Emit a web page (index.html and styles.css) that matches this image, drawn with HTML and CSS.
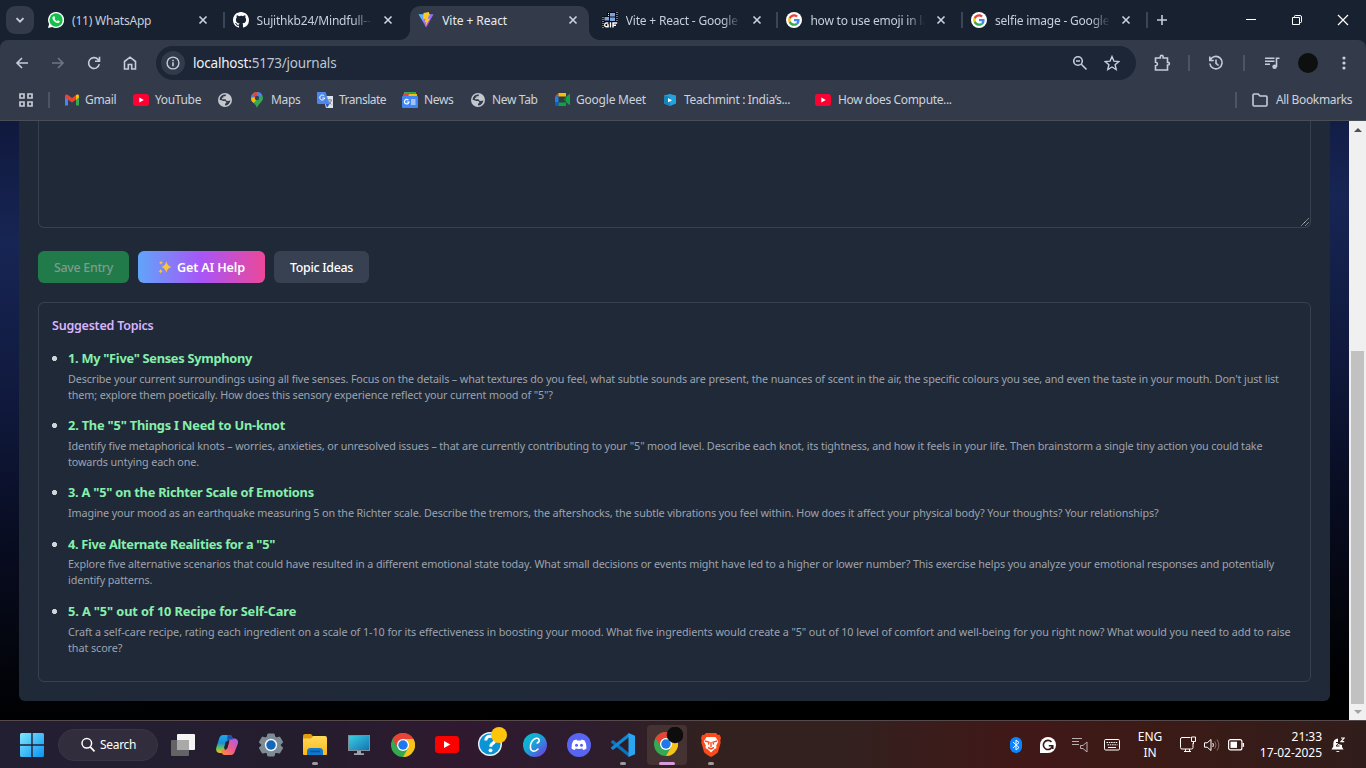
FILE: index.html
```html
<!DOCTYPE html>
<html lang="en">
<head>
<meta charset="utf-8">
<title>Vite + React</title>
<link rel="stylesheet" href="styles.css">
</head>
<body>
<svg class="defs" width="0" height="0">
  <defs>
    <linearGradient id="win" x1="0" y1="0" x2="1" y2="1"><stop offset="0" stop-color="#7ee8fb"/><stop offset="1" stop-color="#0a93f5"/></linearGradient>
    <linearGradient id="vite" x1="0" y1="0" x2="1" y2="1"><stop offset="0" stop-color="#41d1ff"/><stop offset=".6" stop-color="#a45cfb"/><stop offset="1" stop-color="#bd34fe"/></linearGradient>
    <linearGradient id="canva" x1="0" y1="0" x2="1" y2="1"><stop offset="0" stop-color="#00c4cc"/><stop offset=".45" stop-color="#1aa3d6"/><stop offset="1" stop-color="#7d2ae8"/></linearGradient>
    <linearGradient id="copA" x1="0" y1="0" x2="0" y2="1"><stop offset="0" stop-color="#1fa6e8"/><stop offset=".45" stop-color="#1c8fd8"/><stop offset=".7" stop-color="#5fc35a"/><stop offset="1" stop-color="#f0c228"/></linearGradient>
    <linearGradient id="copB" x1="1" y1="0" x2="0" y2="1"><stop offset="0" stop-color="#a45cf0"/><stop offset=".5" stop-color="#ee5a90"/><stop offset="1" stop-color="#fb9038"/></linearGradient>
    <linearGradient id="fold" x1="0" y1="0" x2="0" y2="1"><stop offset="0" stop-color="#ffd95c"/><stop offset="1" stop-color="#fbb716"/></linearGradient>
    <linearGradient id="scr" x1="0" y1="0" x2="1" y2="1"><stop offset="0" stop-color="#3bd0e0"/><stop offset="1" stop-color="#1271b5"/></linearGradient>
    <symbol id="close" viewBox="0 0 10 10"><path d="M1.500 1.500l7 7m0-7l-7 7" stroke="currentColor" stroke-width="1.600" fill="none"/></symbol>
    <symbol id="google" viewBox="0 0 48 48"><circle cx="24" cy="24" r="24" fill="#fff"/><g transform="translate(6.500 6.500) scale(.73)"><path fill="#EA4335" d="M24 9.500c3.540 0 6.710 1.220 9.210 3.600l6.850-6.850C35.900 2.380 30.470 0 24 0 14.620 0 6.510 5.380 2.560 13.220l7.980 6.190C12.430 13.720 17.740 9.500 24 9.500z"/><path fill="#4285F4" d="M46.980 24.550c0-1.570-.15-3.090-.38-4.550H24v9.020h12.940c-.58 2.960-2.260 5.480-4.780 7.180l7.730 6c4.510-4.180 7.090-10.360 7.090-17.650z"/><path fill="#FBBC05" d="M10.530 28.590A14.500 14.500 0 0 1 9.770 24c0-1.600.27-3.140.76-4.590l-7.980-6.190A23.900 23.900 0 0 0 0 24c0 3.880.92 7.540 2.560 10.780z"/><path fill="#34A853" d="M24 48c6.480 0 11.930-2.130 15.890-5.810l-7.730-6c-2.150 1.450-4.920 2.300-8.160 2.300-6.260 0-11.570-4.220-13.470-9.910l-7.980 6.190C6.510 42.620 14.620 48 24 48z"/></g></symbol>
    <symbol id="youtube" viewBox="0 0 24 18"><rect width="24" height="18" rx="4" fill="#ff0033"/><path d="M9.500 5.200v7.600L16.200 9z" fill="#fff"/></symbol>
    <symbol id="globe" viewBox="0 0 24 24"><path fill="#c4c7cd" fill-rule="evenodd" d="M12 0a12 12 0 1 1 0 24a12 12 0 0 1 0-24zM14 2.600l-1.200 3h-3.600v2.600H6.800v2.600h6l1.600 2.400 3.600.4 3.200-1.200A9.300 9.300 0 0 1 12 21.400v-2.600l2.400-2.600-1.600-2.600H9.400L2.700 11.400A9.400 9.400 0 0 1 14 2.600z"/></symbol>
    <symbol id="chrome" viewBox="0 0 48 48"><circle cx="24" cy="24" r="24" fill="#34a853"/><path fill="#fbc116" d="M24 12h20.800A24 24 0 0 1 24 48l10.400-18z"/><path fill="#ea4335" d="M3.200 12a24 24 0 0 1 41.600 0H24a12 12 0 0 0-10.400 18z"/><circle cx="24" cy="24" r="12" fill="#fff"/><circle cx="24" cy="24" r="9.500" fill="#1f77ee"/></symbol>
  </defs>
</svg>

<div class="screen">
  <header class="tabstrip">
    <button class="tab-search"><svg width="12" height="12" viewBox="0 0 12 12"><path d="M2.500 4.200L6 7.700l3.500-3.500" class="line bold"/></svg></button>
    <div class="tab tab-first">
      <svg class="fav" viewBox="0 0 32 32"><path d="M16 0a16 16 0 1 1-7.500 30L0 32l2.200-8A16 16 0 0 1 16 0z" fill="#fff"/><circle cx="16" cy="16" r="13.300" fill="#12c04a"/><path fill="#fff" d="M11.200 8.500c.8-.5 1.600-.2 1.900.5l1.100 2.600c.2.500 0 .9-.3 1.200l-1 1.200c1.200 2.200 2.800 3.600 5 4.500l1.300-1.500c.4-.4.700-.4 1.200-.2l2.600 1.300c.6.300.6.800.4 1.500-.6 1.900-2.600 2.900-4.500 2.500-5-1-9-4.800-10-9-.3-1.800.600-3.700 2.300-4.600z"/></svg>
      <span class="tt"><span class="t">(11) WhatsApp</span></span><svg class="x"><use href="#close"/></svg>
    </div>
    <div class="tab sep">
      <svg class="fav" viewBox="0 0 16 16"><path fill="#fff" d="M8 0C3.580 0 0 3.580 0 8c0 3.540 2.290 6.530 5.470 7.590.4.070.55-.17.55-.38 0-.19-.01-.82-.01-1.490-2.010.37-2.530-.49-2.690-.94-.09-.23-.48-.94-.82-1.130-.28-.15-.68-.52-.01-.53.63-.01 1.080.58 1.230.82.72 1.210 1.870.87 2.330.66.07-.52.28-.87.51-1.070-1.780-.2-3.640-.89-3.640-3.950 0-.87.31-1.590.82-2.150-.08-.2-.36-1.020.08-2.120 0 0 .67-.21 2.200.82A7.600 7.600 0 0 1 8 3.860c.68 0 1.360.09 2 .27 1.530-1.040 2.200-.82 2.200-.82.44 1.100.16 1.920.08 2.120.51.56.82 1.270.82 2.150 0 3.070-1.870 3.750-3.650 3.950.29.25.54.73.54 1.480 0 1.070-.01 1.930-.01 2.200 0 .21.15.46.55.38A8.010 8.010 0 0 0 16 8c0-4.420-3.580-8-8-8z"/></svg>
      <span class="tt fade"><span class="t">Sujithkb24/Mindfull--</span></span><svg class="x"><use href="#close"/></svg>
    </div>
    <div class="tab active">
      <svg class="fav" viewBox="0 0 32 32"><path fill="url(#vite)" d="M1 4.500l30 0L16.500 31z"/><path fill="#ffc920" d="M21.500 0L11 2l-.7 12.500 5-.9-2 7.600 3.500-1-2.600 9.800L24 13l-4.200.8L21.500 7l2.500-.5z"/></svg>
      <span class="tt wide"><span class="t">Vite + React</span></span><svg class="x"><use href="#close"/></svg>
    </div>
    <div class="tab">
      <svg class="fav" viewBox="0 0 16 16"><path d="M5 0h11v10H5z" fill="#080b12"/><path d="M0 4h10v12H0z" fill="#080b12"/><path d="M8 1h5v3.500H8zM8 5.500h5V9H8zM2.500 5H7v3.500H2.500z" fill="#7da3dc"/><path d="M6.500 1v3M15 0v10M1 5v11" stroke="#dfe5ee" stroke-dasharray="1 1"/><path d="M6.300 11H4.200q-1.500 0-1.500 1.900t1.500 1.900h1.900v-1.900H5M8.500 10.200v5.400M11 15.600V11h4.200M11 13.300h3" stroke="#fff" stroke-width="1.400" fill="none"/></svg>
      <span class="tt fade"><span class="t">Vite + React - Google</span></span><svg class="x"><use href="#close"/></svg>
    </div>
    <div class="tab sep">
      <svg class="fav"><use href="#google"/></svg>
      <span class="tt fade"><span class="t">how to use emoji in la</span></span><svg class="x"><use href="#close"/></svg>
    </div>
    <div class="tab sep">
      <svg class="fav"><use href="#google"/></svg>
      <span class="tt fade"><span class="t">selfie image - Google</span></span><svg class="x"><use href="#close"/></svg>
    </div>
    <div class="newtab sep"><svg width="12" height="12" viewBox="0 0 12 12"><path d="M6 1v10M1 6h10" class="line"/></svg></div>
    <div class="winctl">
      <svg width="12" height="12" viewBox="0 0 12 12"><path d="M1 5.500h10" stroke="#fff"/></svg>
      <svg width="12" height="12" viewBox="0 0 12 12"><path d="M1.500 3.500h7v7h-7zM3.500 3.500V2.300q0-.8.800-.8H9q1.500 0 1.500 1.500v4.700q0 .8-.8.800H8.500" fill="none" stroke="#fff"/></svg>
      <svg width="12" height="12" viewBox="0 0 12 12"><path d="M1 1l10 10m0-10L1 11" stroke="#fff" stroke-width="1.200"/></svg>
    </div>
  </header>

  <div class="toolbar">
    <svg class="ic" viewBox="0 0 16 16"><path d="M14 8H3m5-5L3 8l5 5" class="line"/></svg>
    <svg class="ic dim" viewBox="0 0 16 16"><path d="M2 8h11M8 3l5 5-5 5" class="line"/></svg>
    <svg class="ic" viewBox="0 0 16 16"><path d="M13.300 9.200A5.400 5.400 0 1 1 12 4.400L13.300 6M13.500 1.800v4.500H9" class="line"/></svg>
    <svg class="ic" viewBox="0 0 16 16"><path d="M2.500 14V6.500L8 2.200l5.500 4.300V14h-3.800V9.500H6.300V14z" class="line"/></svg>
    <div class="omnibox">
      <span class="info"><svg width="14" height="14" viewBox="0 0 14 14"><circle cx="7" cy="7" r="5.900" class="line thin"/><path d="M7 6.200v4M7 3.800v1.400" class="line"/></svg></span>
      <span class="url t"><b>localhost:</b>5173/journals</span>
      <svg class="ic" viewBox="0 0 16 16"><circle cx="6" cy="6" r="4.300" class="line"/><path d="M4 6h4M9.300 9.300L14.500 14.500" class="line"/></svg>
      <svg class="ic star" viewBox="0 0 16 16"><path d="M8 1.500l1.900 4.600 4.900.4-3.700 3.200 1.100 4.800L8 12l-4.200 2.500 1.100-4.800L1.200 6.500l4.900-.4z" class="line thin"/></svg>
    </div>
    <svg class="ic ext" viewBox="0 0 18 18"><path d="M2.500 4h4.800V2.800a1.400 1.400 0 0 1 2.800 0V4h4.400v4.400h.6a1.300 1.300 0 0 1 0 2.600h-.6v5h-12v-4.200c2.600-.3 2.600-3.300 0-3.600z" class="line"/></svg>
    <i class="vbar"></i>
    <svg class="ic" viewBox="0 0 16 16"><path d="M2.300 5A6.200 6.200 0 1 1 1.800 8.500M1.800 1.500v4h4M8 4.500V8.300l2.600 2.200" class="line"/></svg>
    <i class="vbar"></i>
    <svg class="ic" viewBox="0 0 16 16"><path d="M1 3.200h9.500M1 6.200h9.500M1 9.200h5M12.500 12V3.200h3" class="line"/><circle cx="10.600" cy="11.800" r="2.300" fill="#bfc9dd"/></svg>
    <i class="avatar"></i>
    <svg class="ic" viewBox="0 0 16 16"><g fill="#c8d0df"><circle cx="8" cy="3" r="1.600"/><circle cx="8" cy="8" r="1.600"/><circle cx="8" cy="13" r="1.600"/></g></svg>
  </div>

  <nav class="bookmarks">
    <svg class="grid4" width="14" height="14" viewBox="0 0 14 14"><path d="M1 1h4v4H1zM9 1h4v4H9zM1 9h4v4H1zM9 9h4v4H9z" fill="none" stroke="#c7cbd3" stroke-width="1.700"/></svg>
    <i class="vbar"></i>
    <a><svg width="14" height="12" viewBox="0 0 14 11"><path d="M0 1.500V11h3V4.500z" fill="#4285f4"/><path d="M11 4.500V11h3V1.500z" fill="#34a853"/><path d="M0 1.500C0 0 2 -.5 3 .5l4 3 4-3c1-1 3-.5 3 1V3L7 8 0 3z" fill="#ea4335"/><path d="M11 .5c1-1 3-.5 3 1V3l-3 2.300z" fill="#fbbc04"/></svg><span class="t">Gmail</span></a>
    <a><svg width="16" height="12"><use href="#youtube"/></svg><span class="t">YouTube</span></a>
    <a><svg width="14" height="14"><use href="#globe"/></svg></a>
    <a class="roomy"><svg width="12" height="16" viewBox="0 0 12 16"><path d="M6 0a6 6 0 0 1 6 6c0 4-4.500 5-6 10C4.500 11 0 10 0 6a6 6 0 0 1 6-6z" fill="#34a853"/><path d="M6 0a6 6 0 0 1 5.300 3.200L1 9.500A6 6 0 0 1 1.400 2.200z" fill="#4285f4"/><path d="M1.400 2.200A6 6 0 0 1 6 0L6 3.500 4 5.600z" fill="#ea4335"/><path d="M0 6l4-1 1.500 3L2.500 11Q0 9 0 6z" fill="#fbbc04"/><circle cx="6" cy="6" r="2.200" fill="#37415a"/></svg><span class="t">Maps</span></a>
    <a><svg width="16" height="16" viewBox="0 0 16 16"><path d="M6 4h10v12H9z" fill="#dfe2e8"/><path d="M0 0h8.500l4 12H1.500Q0 12 0 10.500z" fill="#4b87ee"/><path d="M8.700 12h3.800L10 15.800z" fill="#2a56c6"/><path d="M7.200 4A2.500 2.500 0 1 0 7.700 6H5.300" stroke="#fff" fill="none"/><path d="M11 8h4m-2-1v1m1.500 0q-.5 3-3 4.500m0-3.500q1 2 3 3.500" stroke="#6b7485" stroke-width=".8" fill="none"/></svg><span class="t tight">Translate</span></a>
    <a><svg width="16" height="16" viewBox="0 0 16 16"><path d="M2 0h12v4H2z" fill="#34a853"/><path d="M1 2l10-1 4 4H1z" fill="#ea4335"/><path d="M7 2l8 0v3H6z" fill="#fbbc04"/><rect y="4" width="16" height="12" rx="1" fill="#4285f4"/><path d="M6.500 8.200A2.300 2.300 0 1 0 7 10H4.800M9 8h4.500M9 10h4.500M9 12h4.500" stroke="#fff" stroke-width="1.200" fill="none"/></svg><span class="t">News</span></a>
    <a class="mid"><svg width="14" height="14"><use href="#globe"/></svg><span class="t">New Tab</span></a>
    <a><svg width="15" height="13" viewBox="0 0 15 13"><path d="M3.500 0v3.500H0z" fill="#ea4335"/><path d="M3.500 0H11v3.500H3.500z" fill="#fbbc04"/><path d="M0 3.500h3.500v6H0z" fill="#1b7ff0"/><path d="M0 9.500h3.500V13H1.200Q0 13 0 11.800z" fill="#0b5bd0"/><path d="M3.500 9.500H11V13H3.500z" fill="#0fa345"/><path d="M11 4L14 1.200q1-.5 1 .5v9.600q0 1-1 .5L11 9z" fill="#0fa345"/><path d="M8.500 6.500L11 3.500v6z" fill="#0b7d35"/></svg><span class="t loose">Google Meet</span></a>
    <a class="roomy"><svg width="12" height="12" viewBox="0 0 12 12"><path d="M0 1.500L6 0l6 1.500v8L6 12 0 9.500z" fill="#22a3df"/><path d="M0 1.500l6 1.600v8.900L0 9.500z" fill="#1783bb"/><path d="M4 4v4.500l4-2.200z" fill="#fff"/></svg><span class="t">Teachmint : India’s...</span></a>
    <a class="mid"><svg width="16" height="12"><use href="#youtube"/></svg><span class="t">How does Compute...</span></a>
    <i class="vbar"></i>
    <a class="roomy"><svg width="16" height="14" viewBox="0 0 16 14"><path d="M1 2.300q0-1.300 1.300-1.300h3.900L8 3h6q1 0 1 1v7.700q0 1.300-1 1.300H2.300Q1 13 1 11.700z" class="line"/></svg><span class="t">All Bookmarks</span></a>
  </nav>

  <main class="viewport">
    <div class="page">
      <section class="card">
        <div class="editor"><svg class="grip" width="8" height="8" viewBox="0 0 8 8"><path d="M.5 7.500l7-7M4.500 7.500l3-3" stroke="#d7d9dc" stroke-dasharray="1.200 .6"/></svg></div>
        <div class="actions">
          <button class="btn save">Save Entry</button>
          <button class="btn ai"><svg width="14" height="14" viewBox="0 0 14 14"><path d="M8.300 1.200q.9 4.800 5.200 5.800-4.300 1-5.200 5.800Q7.400 8 3.200 7q4.200-1 5.100-5.800zM3 .8q.3 1.700 2 2-1.700.3-2 2-.3-1.700-2-2 1.700-.3 2-2zM2.600 9q.4 1.900 2.200 2.200-1.800.4-2.200 2.200Q2.200 11.600.4 11.200 2.200 10.900 2.600 9z" fill="#fdc33c"/></svg><span class="t">Get AI Help</span></button>
          <button class="btn topic">Topic Ideas</button>
        </div>
        <div class="topics">
          <h3>Suggested Topics</h3>
          <ul>
            <li class="topic-1"><h4>1. My "Five" Senses Symphony</h4><p>Describe your current surroundings using all five senses. Focus on the details – what textures do you feel, what subtle sounds are present, the nuances of scent in the air, the specific colours you see, and even the taste in your mouth. Don't just list<br>them; explore them poetically. How does this sensory experience reflect your current mood of "5"?</p></li>
            <li class="topic-2"><h4>2. The "5" Things I Need to Un-knot</h4><p>Identify five metaphorical knots – worries, anxieties, or unresolved issues – that are currently contributing to your "5" mood level. Describe each knot, its tightness, and how it feels in your life. Then brainstorm a single tiny action you could take<br>towards untying each one.</p></li>
            <li class="topic-3"><h4>3. A "5" on the Richter Scale of Emotions</h4><p>Imagine your mood as an earthquake measuring 5 on the Richter scale. Describe the tremors, the aftershocks, the subtle vibrations you feel within. How does it affect your physical body? Your thoughts? Your relationships?</p></li>
            <li class="topic-4"><h4>4. Five Alternate Realities for a "5"</h4><p>Explore five alternative scenarios that could have resulted in a different emotional state today. What small decisions or events might have led to a higher or lower number? This exercise helps you analyze your emotional responses and potentially<br>identify patterns.</p></li>
            <li class="topic-5"><h4>5. A "5" out of 10 Recipe for Self-Care</h4><p>Craft a self-care recipe, rating each ingredient on a scale of 1-10 for its effectiveness in boosting your mood. What five ingredients would create a "5" out of 10 level of comfort and well-being for you right now? What would you need to add to raise<br>that score?</p></li>
          </ul>
        </div>
      </section>
    </div>
    <aside class="scroll"><i class="up"></i><i class="thumb"></i><i class="down"></i></aside>
  </main>

  <footer class="taskbar">
    <span class="cell"><svg width="24" height="24" viewBox="0 0 24 24"><path fill="url(#win)" d="M1.500 0H11.300v11.300H0V1.500Q0 0 1.500 0zM12.700 0h9.800Q24 0 24 1.500v9.800H12.700zM0 12.700h11.300V24H1.500Q0 24 0 22.500zM12.700 12.700H24v9.800q0 1.500-1.500 1.500h-9.800z"/></svg></span>
    <div class="search"><svg width="16" height="16" viewBox="0 0 16 16"><circle cx="6.800" cy="6.300" r="4.800" fill="none" stroke="#fff" stroke-width="1.500"/><path d="M10.200 9.800l4.300 4.500" stroke="#fff" stroke-width="1.700"/></svg><span class="t">Search</span></div>
    <span class="cell"><svg width="24" height="22" viewBox="0 0 24 22"><rect x="6" width="18" height="16" rx="1" fill="#f4f4f4"/><rect y="6" width="18" height="16" rx="1" fill="#6b6b6b" opacity=".9"/><path d="M6 6h12v10H6z" fill="#a9a9a9"/></svg></span>
    <span class="cell"><svg width="24" height="24" viewBox="0 0 24 24"><path fill="url(#copA)" d="M8 2h6.500q2 0 2.700 2l.8 3h-3.500q-2 0-2.700 2l-2.300 8q-.8 3-3 3H4.500Q.5 19.500 1.200 15L4 6q1.200-4 4-4z"/><path fill="url(#copB)" d="M16 22H9.500q-2 0-2.700-2L6 17h3.500q2 0 2.700-2l2.300-8q.8-1.500 3-1.500h2.200q4 .5 3.200 5L20 18q-1.200 4-4 4z"/><path fill="#1d4fb4" d="M12.500 2h2q2 0 2.700 2l.8 2.500h-3.500q-1.500 0-2.300 1.500z"/><path d="M10.800 8.500h3.400l-2 7H8.800z" fill="#2a2033"/></svg></span>
    <span class="cell"><svg width="24" height="24" viewBox="0 0 24 24"><path fill="#7e8b95" stroke="#7e8b95" stroke-width="2" stroke-linejoin="round" d="M9.300 1.500h5.400l.8 2.900 1.800 1 3-.8L23 9l-2.100 2.200v1.800L23 15l-2.700 4.500-3-.8-1.800 1-.8 2.800H9.300l-.8-2.800-1.800-1-3 .8L1 15l2.100-2v-1.800L1 9l2.700-4.400 3 .8 1.800-1z"/><circle cx="12" cy="12" r="6.200" fill="#f2f4f6"/><circle cx="12" cy="12" r="4.700" fill="#1467b8"/></svg></span>
    <span class="cell run"><svg width="24" height="22" viewBox="0 0 24 22"><path d="M0 2Q0 0 2 0h6l2 2.500V6H0z" fill="#e09c0c"/><path d="M0 4.500h8L10 2h12q2 0 2 2v16q0 1-1 1H1q-1 0-1-1z" fill="url(#fold)"/><path d="M4 21v-3.500Q4 14 7.500 14h9q3.500 0 3.500 3.500V21z" fill="#1178cc"/><path d="M7 17.500h10" stroke="#0a549c" stroke-width="1.500"/></svg></span>
    <span class="cell"><svg width="22" height="20" viewBox="0 0 22 20"><rect x=".5" y=".5" width="21" height="15" fill="url(#scr)" stroke="#7f8d96"/><path d="M9 16h4v2.200h3V20H6v-1.800h3z" fill="#9aa6ae"/></svg></span>
    <span class="cell"><svg width="24" height="24"><use href="#chrome"/></svg></span>
    <span class="cell"><svg width="24" height="17" viewBox="0 0 24 17"><rect width="24" height="17" rx="3" fill="#f00"/><path d="M9 5v7l6.300-3.500z" fill="#fff"/></svg></span>
    <span class="cell lift"><svg width="30" height="30" viewBox="0 0 30 30"><circle cx="13" cy="17" r="12" fill="#f1f6f9"/><circle cx="13" cy="17" r="10.600" fill="#0b95d6"/><path d="M8.800 13.500q0-4.300 4.500-4.300t4.500 3.900q0 2.200-2.300 3.500-1.800 1-1.800 3.200" stroke="#fff" stroke-width="3" fill="none"/><circle cx="13.500" cy="23.300" r="1.900" fill="#fff"/><circle cx="22" cy="8" r="8" fill="#ffc40c"/></svg></span>
    <span class="cell"><svg width="24" height="24" viewBox="0 0 24 24"><circle cx="12" cy="12" r="12" fill="url(#canva)"/><path d="M14.200 10q2.200-.8 2-3-.5-2.200-3-1.700C9.500 6 7 10.500 7.400 14.500c.4 4.200 4.600 5 7.600 1.500" stroke="#fff" stroke-width="1.600" fill="none" stroke-linecap="round"/></svg></span>
    <span class="cell"><svg width="24" height="24" viewBox="0 0 24 24"><circle cx="12" cy="12" r="12" fill="#5865f2"/><path fill="#fff" d="M9.500 6.500l.5 1h4l.5-1q2 .2 3.300 1.200Q19.800 11 19.500 15.500q-1.500 1.300-3.300 1.600l-.9-1.500q-3.300.9-6.600 0l-.9 1.500q-1.800-.3-3.300-1.600Q4.200 11 6.200 7.700 7.500 6.700 9.500 6.500z"/><circle cx="9.500" cy="12.300" r="1.500" fill="#5865f2"/><circle cx="14.500" cy="12.300" r="1.500" fill="#5865f2"/></svg></span>
    <span class="cell run"><svg width="24" height="24" viewBox="0 0 24 24"><path d="M0 8.500L2 7l16 13v4L.2 9.800z" fill="#0b72bd"/><path d="M0 15.500L2 17 18 4V0L.2 14.200z" fill="#1388d4"/><path d="M17.500 0L24 2.800v18.400L17.500 24z" fill="#2aa5f2"/></svg></span>
    <span class="cell focus lift"><svg width="30" height="30" viewBox="0 0 30 30"><svg x="1" y="5" width="24" height="24"><use href="#chrome"/></svg><circle cx="22" cy="8" r="8.300" fill="#0d0d0d"/></svg></span>
    <span class="cell run"><svg width="20" height="24" viewBox="0 0 20 24"><path d="M5 0h10l2 2 1.700-.2L20 5l-.7 2.500.4 2L17 19q-.8 1.500-7 5-6.200-3.500-7-5L.3 9.500l.4-2L0 5l1.300-3.200L3 2z" fill="#fb4a1c"/><path d="M5.500 4h9l2.700 4.500-2 4 .3 2.500-2.200 1.200L10 19.500l-3.300-3.300L4.500 15l.3-2.500-2-4z" fill="#fff"/><path d="M4 8l4 1.200-.6 2.500M16 8l-4 1.200.6 2.500M10 9v5M7 14.500l3 1.500 3-1.500" stroke="#fb4a1c" stroke-width="1.400" fill="none"/></svg></span>
    <div class="tray">
      <svg width="12" height="16" viewBox="0 0 12 16"><rect width="12" height="16" rx="6" fill="#0a84ff"/><path d="M3 5l6 5.500L6 13V3l3 2.500L3 11" stroke="#fff" fill="none"/></svg>
      <svg width="16" height="16" viewBox="0 0 16 16"><path d="M8 0a8 8 0 0 1 0 16H0V8a8 8 0 0 1 8-8z" fill="#fff"/><path d="M11.500 5A4.600 4.600 0 1 0 12.500 8.700H8.800M12.800 8.700V12" stroke="#3a1717" stroke-width="1.600" fill="none"/></svg>
      <svg width="16" height="16" viewBox="0 0 16 16"><path d="M0 1.500h10M0 4.500h7M0 7.500h7" stroke="#b9adad" fill="none"/><path d="M8.500 8.500h2.500l4-3.500v10l-4-3.500H8.500z" stroke="#b9adad" fill="none"/></svg>
      <svg width="16" height="12" viewBox="0 0 16 12"><rect x=".5" y=".5" width="15" height="10.500" rx="1.200" fill="none" stroke="#fff"/><path d="M2.500 3.500h11M3.500 5.800h10" stroke="#fff" stroke-dasharray="1.500 .8"/><path d="M4 8.500h8" stroke="#fff"/></svg>
      <div class="lang"><span>ENG</span><span>IN</span></div>
      <svg width="17" height="17" viewBox="0 0 17 17"><path d="M10.500 1.500H2Q.5 1.500 .5 3v8.500q0 1.500 1.500 1.500h9.500q1.500 0 1.500-1.500V7M4 15.500h7M5.500 13v2.500M9.500 13v2.500M11.500 1h4v4.500h-4zM13.500 5.500V8" stroke="#fff" fill="none"/></svg>
      <svg width="16" height="14" viewBox="0 0 16 14"><path d="M.5 4.800h2.700L7 1.500v11L3.200 9.200H.5zM8.800 5q1.200 2 0 4" stroke="#fff" fill="none"/><path d="M10.800 3.300q2.500 3.700 0 7.400M13 1.500q3.800 5.500 0 11" stroke="#806c6a" fill="none"/></svg>
      <svg width="17" height="12" viewBox="0 0 17 12"><rect x=".6" y=".6" width="13.300" height="10.300" rx="2" stroke="#fff" stroke-width="1.200" fill="none"/><rect x="2.500" y="2.700" width="6.500" height="6.200" fill="#fff"/><path d="M15.300 4v3.800" stroke="#fff" stroke-width="1.500"/></svg>
      <div class="clock"><span>21:33</span><span>17-02-2025</span></div>
      <svg class="bell" width="14" height="16" viewBox="0 0 14 16"><path d="M7 1.500q-4.500.3-4.700 5V9.500L.5 12.500h12L11 10V8L7 7z" fill="#fff"/><path d="M4.800 14q2 2 4 0z" fill="#fff"/><path d="M10 1h3.200L10 4.600h3.200" stroke="#fff" stroke-width="1.200" fill="none"/><path d="M5 5.500h3.200L5 9h3.500" stroke="#3a1717" fill="none"/></svg>
    </div>
  </footer>
</div>
</body>
</html>
```
FILE: styles.css
```css
* { box-sizing: border-box; }
body { margin: 0; background: #000; font-family: "Noto Sans", "Open Sans", sans-serif; }
.defs { position: absolute; }
.screen { width: 1366px; height: 768px; overflow: hidden; display: flex; flex-direction: column; background: #182130; }
.t { white-space: nowrap; }
svg { flex: none; display: block; }
.line { fill: none; stroke: #c5cddc; stroke-width: 1.6; }
.line.thin { stroke-width: 1.4; }
.line.bold { stroke-width: 1.9; }

/* tab strip */
.tabstrip { height: 40px; display: grid; grid-template-columns: 38px repeat(6, 184.600px) 40px 1fr; color: #c6cedd; font-size: 12px; letter-spacing: -.2px; }
.tab-search { width: 28px; height: 28px; margin: 6px 0 0 6px; border: 0; border-radius: 9px; background: #333b4b; display: grid; place-items: center; padding: 0; }
.tab { display: flex; align-items: center; padding-left: 10px; position: relative; }
.fav { width: 16px; height: 16px; }
.tt { width: 115px; margin-left: 8px; white-space: nowrap; }
.wide { letter-spacing: -.05px; }
.fade { -webkit-mask-image: linear-gradient(90deg, #000 84%, transparent); mask-image: linear-gradient(90deg, #000 84%, transparent); }
.x { width: 10px; height: 10px; margin-left: 11px; color: #ccd3df; }
.sep { background: linear-gradient(#3a4557, #3a4557) 0 12px / 2px 16px no-repeat; }
.active { height: 34px; margin: 6px 2.500px 0 3px; padding: 0 0 6px 8px; background: #333b4b; border-radius: 10px 10px 0 0; color: #e6eaf1; }
.active::before, .active::after { content: ""; position: absolute; bottom: 0; width: 10px; height: 10px; }
.active::before { left: -10px; background: radial-gradient(circle at 0 0, transparent 9.500px, #333b4b 10px); }
.active::after { right: -10px; background: radial-gradient(circle at 100% 0, transparent 9.500px, #333b4b 10px); }
.newtab { display: flex; align-items: center; padding-left: 10px; }
.winctl { display: flex; justify-content: flex-end; align-items: center; gap: 34px; padding-right: 17px; }

/* toolbar */
.toolbar { height: 46px; background: #333b4b; border-radius: 8px 8px 0 0; display: grid; grid-template-columns: 36px 36px 36px 36px 988px 52px 2px 52px 4px 52px 20px 52px; align-items: center; padding-left: 4px; justify-items: center; }
.ic { width: 16px; height: 16px; }
.dim { opacity: .4; }
.omnibox { width: 980px; height: 34px; margin-left: 8px; border-radius: 17px; background: #1d2636; display: flex; align-items: center; padding: 0 16px 0 5px; }
.info { width: 24px; height: 24px; border-radius: 50%; background: #333b4b; display: grid; place-items: center; }
.url { flex: 1; margin-left: 8px; font-size: 13.500px; letter-spacing: -.2px; color: #bcc5d3; }
.url b { font-weight: 400; color: #eef1f6; }
.star { margin-left: 16px; }
.ext { width: 18px; height: 18px; }
.vbar { width: 2px; height: 16px; background: #4a5568; }
.avatar { width: 20px; height: 20px; border-radius: 50%; background: #0e0f0f; }

/* bookmarks */
.bookmarks { height: 35px; background: #333b4b; border-bottom: 1px solid #4a4e57; display: grid; grid-template-columns: 29px 17px 68px 85px 33px 66px 85px 69px 84px 109px 151px 420px 17px 1fr; align-items: center; padding: 0 0 7px 19px; color: #cdd2da; font-size: 12px; letter-spacing: -.35px; }
.bookmarks a { display: flex; align-items: center; gap: 6px; }
.bookmarks .mid { gap: 7px; }
.bookmarks .roomy { gap: 8px; }
.bookmarks .tight { letter-spacing: -.5px; }
.bookmarks .loose { letter-spacing: -.22px; }

/* web page */
.viewport { height: 599px; display: flex; background: #000; }
.page { width: 1349px; padding: 0 19px; background: linear-gradient(178deg, #10193d 0, #172554 19%, #10193c 44%, #080c20 66%, #000 95%); }
.card { height: 580px; background: #202937; border-radius: 0 0 6px 6px; padding: 0 19px; }
.editor { height: 107px; border: 1px solid #374151; border-top: 0; border-radius: 0 0 6px 6px; display: flex; justify-content: flex-end; align-items: flex-end; padding: 0 1px 1px 0; }
.actions { display: flex; gap: 9px; margin-top: 23px; }
.btn { height: 32px; border: 0; padding: 0; border-radius: 6px; color: #fff; font: 500 12.400px "Noto Sans", sans-serif; letter-spacing: -.28px; display: flex; align-items: center; justify-content: center; }
.save { width: 91px; background: #217a49; color: #7e9c8c; }
.ai { width: 127px; gap: 5px; font-weight: 600; font-size: 12.600px; letter-spacing: -.15px; background: linear-gradient(90deg, #60a5fa, #a855f7 50%, #ec4899); }
.topic { width: 95px; background: #374151; }
.topics { height: 380px; margin-top: 19px; border: 1px solid #374151; border-radius: 6px; padding: 13px; white-space: nowrap; }
h3 { margin: 0; font-size: 12.500px; line-height: 20px; font-weight: 600; letter-spacing: -.23px; color: #d8b4fe; }
ul { list-style: none; margin: 13px 0 0; padding: 0; display: grid; gap: 13.500px; }
li { padding-left: 16px; background: radial-gradient(circle at 2.500px 9.500px, #d1d5db 2.200px, transparent 2.900px); }
h4 { margin: 0; font-size: 12.800px; line-height: 19.200px; font-weight: 700; color: #86efac; }
p { margin: 2.500px 0 0; font-size: 10.800px; line-height: 16px; color: #9ca3af; }
.topic-1 h4 { letter-spacing: -.28px; }
.topic-2 h4 { letter-spacing: -.19px; }
.topic-3 h4 { letter-spacing: -.23px; }
.topic-4 h4 { letter-spacing: -.3px; }
.topic-5 h4 { letter-spacing: -.12px; }
.topic-1 p, .topic-4 p { letter-spacing: -.129px; }
.topic-2 p { letter-spacing: -.13px; }
.topic-3 p { letter-spacing: -.14px; }
.topic-5 p { letter-spacing: -.08px; }
.scroll { width: 17px; background: #f0f0f0; display: flex; flex-direction: column; align-items: center; }
.up, .down { border: 4px solid transparent; }
.up { border-top: 0; border-bottom-color: #505050; margin-top: 7px; }
.thumb { width: 13px; height: 353px; margin-top: 219px; background: #c1c1c1; }
.down { border-bottom: 0; border-top-color: #a3a3a3; margin-top: 6px; }

/* taskbar */
.taskbar { height: 48px; border-top: 1px solid #55494c; background: linear-gradient(90deg, #231f33 0, #241d2e 22%, #30192f 34%, #2d1d2d 43%, #32211f 52%, #33211f 62%, #401818 74%, #3c1a16 84%, #301d1b 100%); display: grid; grid-template-columns: 44px 107px repeat(13, 44px) 1fr; padding-left: 10px; color: #fff; align-items: center; }
.cell { width: 44px; height: 40px; display: grid; place-items: center; position: relative; }
.run::after { content: ""; position: absolute; bottom: 0; left: 19px; width: 6px; height: 3px; border-radius: 2px; background: #a09aa0; }
.focus::before { content: ""; position: absolute; inset: 0 2px; background: #443332; border-radius: 4px; }
.focus::after { content: ""; position: absolute; bottom: 0; left: 14px; width: 16px; height: 3px; border-radius: 2px; background: #dc9ade; }
.focus svg { position: relative; }
.lift { padding: 0 0 5px 2px; }
.search { width: 100px; height: 32px; margin-left: 4px; border-radius: 16px; background: #322d3d; border: 1px solid #3a3444; display: flex; align-items: center; padding-left: 21px; gap: 4px; font-size: 12px; letter-spacing: -.3px; }
.tray { display: grid; grid-template-columns: 30px 32px 32px 27px 49px 24px 24px 24px 70px 1fr; align-items: center; justify-content: start; padding-left: 277px; font-size: 12px; letter-spacing: -.05px; white-space: nowrap; }
.lang { width: 38px; text-align: center; line-height: 16px; display: grid; }
.clock { text-align: right; line-height: 16px; display: grid; }
.bell { margin-left: 9px; }
```
